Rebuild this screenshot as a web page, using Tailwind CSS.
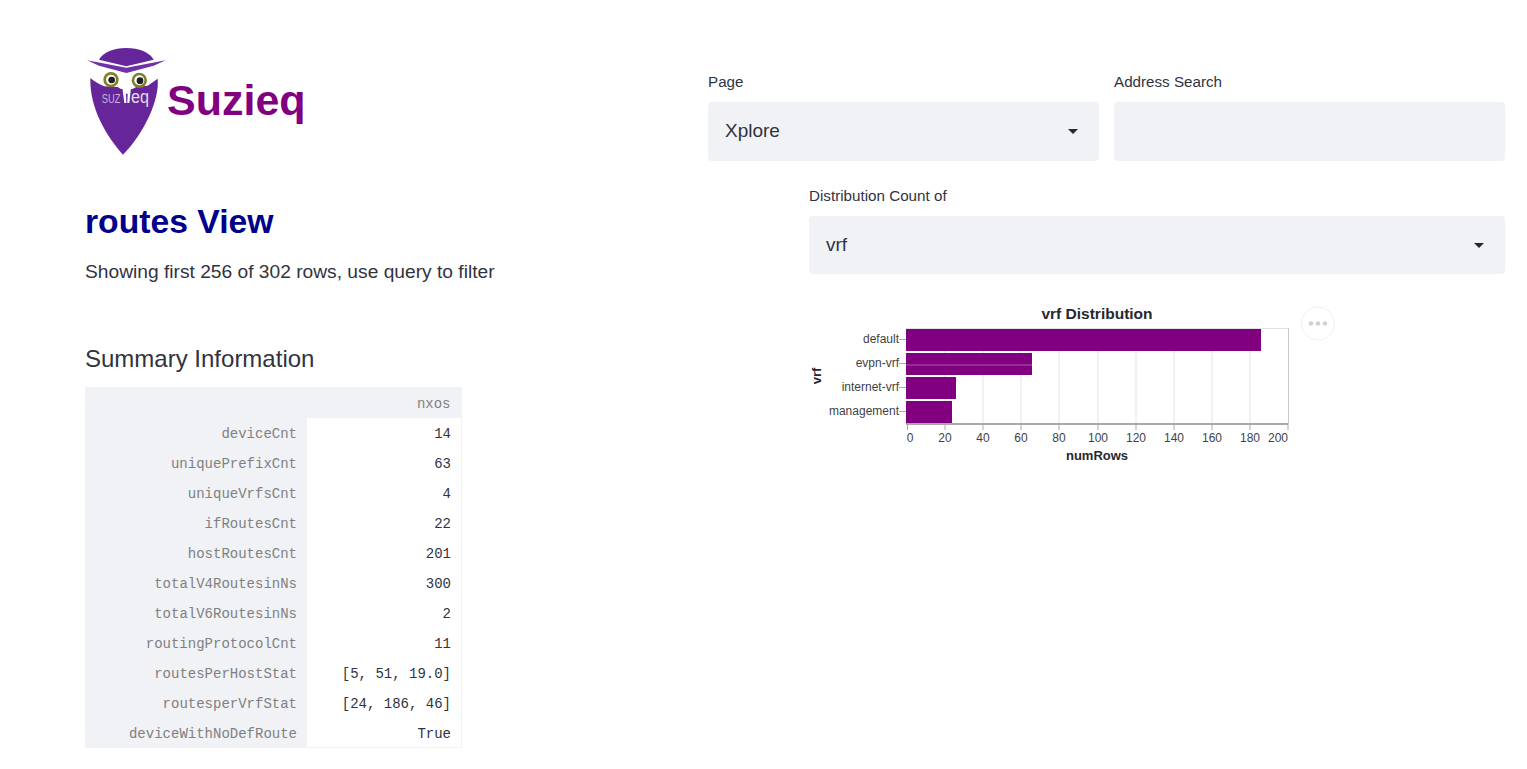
<!DOCTYPE html>
<html lang="en">
<head>
  <meta charset="UTF-8" />
  <title>Suzieq</title>
  <script src="https://cdn.jsdelivr.net/npm/@tailwindcss/browser@4"></script>
</head>
<body class="bg-white text-[#31333f] font-['Liberation_Sans',sans-serif] overflow-hidden">
  <div class="flex h-[769px]">

    <!-- Left column -->
    <div class="w-[708px] shrink-0 pl-[85px] pt-[48px]">
      <div class="flex items-start">
        <svg class="w-[79px] h-[107px] ml-[2px] shrink-0" viewBox="50 55 237 321">
          <path d="M86 90 C98 68 130 55 168 55 C206 55 238 68 250 90 L168 110 Z" fill="#66269a"/>
          <path d="M50 92 L168 114 L286 92 L250 108 L168 130 L86 108 Z" fill="#6f30a8"/>
          <path d="M60 145 C72 155 88 164 102 170 L142 172 L152 178 L186 178 L198 172 L232 168 L262 147 C268 210 222 310 158 375 C110 320 58 240 60 145 Z" fill="#66269a"/>
          <circle cx="122" cy="150" r="23" fill="#7d7f2a"/>
          <circle cx="122" cy="150" r="15" fill="#ffffff"/>
          <circle cx="124" cy="151" r="10" fill="#1f1f1f"/>
          <circle cx="207" cy="152" r="23" fill="#7d7f2a"/>
          <circle cx="207" cy="152" r="15" fill="#ffffff"/>
          <circle cx="209" cy="153" r="10" fill="#1f1f1f"/>
          <text x="94" y="219" font-size="38" textLength="56" lengthAdjust="spacingAndGlyphs" fill="#c4b2dc" font-family="Liberation Sans">SUZ</text>
          <path d="M156 175 L182 175 L177 220 L162 220 Z" fill="#ffffff"/>
          <path d="M167 192 L172 192 L171 220 L168 220 Z" fill="#66269a"/>
          <text x="182" y="220" font-size="56" textLength="54" lengthAdjust="spacingAndGlyphs" fill="#e4dcf0" font-family="Liberation Sans">eq</text>
        </svg>
        <h1 class="text-[43px] leading-none font-bold text-[#800080] mt-[31px] ml-px">Suzieq</h1>
      </div>
      <h2 class="text-[33.7px] leading-none font-bold text-[#00008b] mt-[50px]">routes View</h2>
      <p class="text-[19.2px] leading-[26px] mt-[20px]">Showing first 256 of 302 rows, use query to filter</p>
      <h3 class="text-[24px] leading-[32px] mt-[58px]">Summary Information</h3>
      <table class="w-[377px] mt-[12px] font-['Liberation_Mono',monospace] text-[14px] border-collapse table-fixed [&_th]:pt-[4px] [&_td]:pt-[4px]">
        <tbody>
          <tr class="h-[31px]">
            <th class="w-[222px] bg-[#f0f2f6]"></th>
            <th class="font-normal text-right pr-[11px] bg-[#f0f2f6] text-[#808080]">nxos</th>
          </tr>
          <tr class="h-[30px]"><th class="font-normal text-right pr-[10px] bg-[#f0f2f6] text-[#808080]">deviceCnt</th><td class="text-right pr-[10px] border-r border-[#f0f2f6]">14</td></tr>
          <tr class="h-[30px]"><th class="font-normal text-right pr-[10px] bg-[#f0f2f6] text-[#808080]">uniquePrefixCnt</th><td class="text-right pr-[10px] border-r border-[#f0f2f6]">63</td></tr>
          <tr class="h-[30px]"><th class="font-normal text-right pr-[10px] bg-[#f0f2f6] text-[#808080]">uniqueVrfsCnt</th><td class="text-right pr-[10px] border-r border-[#f0f2f6]">4</td></tr>
          <tr class="h-[30px]"><th class="font-normal text-right pr-[10px] bg-[#f0f2f6] text-[#808080]">ifRoutesCnt</th><td class="text-right pr-[10px] border-r border-[#f0f2f6]">22</td></tr>
          <tr class="h-[30px]"><th class="font-normal text-right pr-[10px] bg-[#f0f2f6] text-[#808080]">hostRoutesCnt</th><td class="text-right pr-[10px] border-r border-[#f0f2f6]">201</td></tr>
          <tr class="h-[30px]"><th class="font-normal text-right pr-[10px] bg-[#f0f2f6] text-[#808080]">totalV4RoutesinNs</th><td class="text-right pr-[10px] border-r border-[#f0f2f6]">300</td></tr>
          <tr class="h-[30px]"><th class="font-normal text-right pr-[10px] bg-[#f0f2f6] text-[#808080]">totalV6RoutesinNs</th><td class="text-right pr-[10px] border-r border-[#f0f2f6]">2</td></tr>
          <tr class="h-[30px]"><th class="font-normal text-right pr-[10px] bg-[#f0f2f6] text-[#808080]">routingProtocolCnt</th><td class="text-right pr-[10px] border-r border-[#f0f2f6]">11</td></tr>
          <tr class="h-[30px]"><th class="font-normal text-right pr-[10px] bg-[#f0f2f6] text-[#808080]">routesPerHostStat</th><td class="text-right pr-[10px] border-r border-[#f0f2f6]">[5, 51, 19.0]</td></tr>
          <tr class="h-[30px]"><th class="font-normal text-right pr-[10px] bg-[#f0f2f6] text-[#808080]">routesperVrfStat</th><td class="text-right pr-[10px] border-r border-[#f0f2f6]">[24, 186, 46]</td></tr>
          <tr class="h-[30px]"><th class="font-normal text-right pr-[10px] bg-[#f0f2f6] text-[#808080]">deviceWithNoDefRoute</th><td class="text-right pr-[10px] border-r border-b border-[#f0f2f6]">True</td></tr>
        </tbody>
      </table>
    </div>

    <!-- Right column -->
    <div class="w-[797px] shrink-0 pt-[72px]">
      <div class="grid grid-cols-2 gap-x-[15px]">
        <div>
          <label class="block text-[15.2px] leading-[20px] mb-[10px]">Page</label>
          <div class="h-[59px] bg-[#f0f2f6] rounded-[4px] flex items-center justify-between pl-[17px] pr-[21px] text-[19px]">
            <span>Xplore</span>
            <span class="w-0 h-0 border-x-[5px] border-x-transparent border-t-[5px] border-t-[#262730]"></span>
          </div>
        </div>
        <div>
          <label class="block text-[15.2px] leading-[20px] mb-[10px]">Address Search</label>
          <div class="h-[59px] bg-[#f0f2f6] rounded-[4px]"></div>
        </div>
      </div>

      <div class="ml-[101px] mt-[25px]">
        <label class="block text-[15.2px] leading-[20px] mb-[10px]">Distribution Count of</label>
        <div class="h-[58px] bg-[#f0f2f6] rounded-[4px] flex items-center justify-between pl-[17px] pr-[21px] text-[19px]">
          <span>vrf</span>
          <span class="w-0 h-0 border-x-[5px] border-x-transparent border-t-[5px] border-t-[#262730]"></span>
        </div>

        <!-- vrf chart, 1 unit = 1.91px -->
        <svg class="block mt-[26px]" width="530" height="170" viewBox="809 300 530 170" font-family="Liberation Sans">
          <text x="1097" y="318.5" text-anchor="middle" font-size="15.5" font-weight="bold" fill="#262730">vrf Distribution</text>
          <g stroke="#e3e3e3" stroke-width="1">
            <line x1="945" y1="328" x2="945" y2="424"/>
            <line x1="983" y1="328" x2="983" y2="424"/>
            <line x1="1021" y1="328" x2="1021" y2="424"/>
            <line x1="1059" y1="328" x2="1059" y2="424"/>
            <line x1="1098" y1="328" x2="1098" y2="424"/>
            <line x1="1136" y1="328" x2="1136" y2="424"/>
            <line x1="1174" y1="328" x2="1174" y2="424"/>
            <line x1="1212" y1="328" x2="1212" y2="424"/>
            <line x1="1250" y1="328" x2="1250" y2="424"/>
            <line x1="906" y1="328.5" x2="1288" y2="328.5"/>
          </g>
          <line x1="1288.5" y1="328" x2="1288.5" y2="424" stroke="#c8c8c8"/>
          <g fill="#800080">
            <rect x="906" y="329" width="355" height="22"/>
            <rect x="906" y="353" width="126" height="22"/>
            <rect x="906" y="377" width="50" height="22"/>
            <rect x="906" y="401" width="46" height="22"/>
          </g>
          <line x1="906" y1="365" x2="1032" y2="365" stroke="#a45aa4"/>
          <g stroke="#a9a9a9">
            <line x1="906" y1="424" x2="1288" y2="424" stroke-width="2"/>
            <line x1="899" y1="339.5" x2="906" y2="339.5"/>
            <line x1="899" y1="363.5" x2="906" y2="363.5"/>
            <line x1="899" y1="387.5" x2="906" y2="387.5"/>
            <line x1="899" y1="411.5" x2="906" y2="411.5"/>
            <line x1="907.5" y1="424" x2="907.5" y2="430"/>
            <line x1="945" y1="424" x2="945" y2="430"/>
            <line x1="983" y1="424" x2="983" y2="430"/>
            <line x1="1021" y1="424" x2="1021" y2="430"/>
            <line x1="1059" y1="424" x2="1059" y2="430"/>
            <line x1="1098" y1="424" x2="1098" y2="430"/>
            <line x1="1136" y1="424" x2="1136" y2="430"/>
            <line x1="1174" y1="424" x2="1174" y2="430"/>
            <line x1="1212" y1="424" x2="1212" y2="430"/>
            <line x1="1250" y1="424" x2="1250" y2="430"/>
            <line x1="1288" y1="424" x2="1288" y2="430"/>
          </g>
          <g font-size="12" fill="#3f3f46" text-anchor="end">
            <text x="899" y="343">default</text>
            <text x="899" y="367">evpn-vrf</text>
            <text x="899" y="391">internet-vrf</text>
            <text x="899" y="415">management</text>
          </g>
          <g font-size="12" fill="#3f3f46" text-anchor="middle">
            <text x="910" y="442">0</text>
            <text x="945" y="442">20</text>
            <text x="983" y="442">40</text>
            <text x="1021" y="442">60</text>
            <text x="1059" y="442">80</text>
            <text x="1098" y="442">100</text>
            <text x="1136" y="442">120</text>
            <text x="1174" y="442">140</text>
            <text x="1212" y="442">160</text>
            <text x="1250" y="442">180</text>
            <text x="1278" y="442">200</text>
          </g>
          <text x="1097" y="460" text-anchor="middle" font-size="13" font-weight="bold" fill="#262730">numRows</text>
          <text transform="translate(821 376) rotate(-90)" text-anchor="middle" font-size="13" font-weight="bold" fill="#262730">vrf</text>
          <circle cx="1318" cy="323.5" r="16.5" fill="#ffffff" stroke="#f0f0f0"/>
          <g fill="#d0d0d0">
            <circle cx="1311" cy="323.5" r="2.2"/>
            <circle cx="1318" cy="323.5" r="2.2"/>
            <circle cx="1325" cy="323.5" r="2.2"/>
          </g>
        </svg>
      </div>
    </div>
  </div>
</body>
</html>
